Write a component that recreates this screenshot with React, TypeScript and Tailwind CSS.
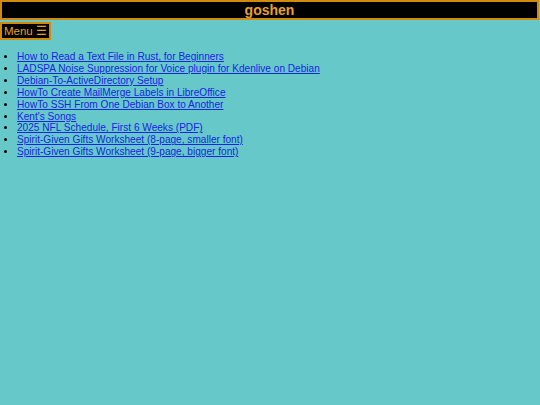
const links = [
  "How to Read a Text File in Rust, for Beginners",
  "LADSPA Noise Suppression for Voice plugin for Kdenlive on Debian",
  "Debian-To-ActiveDirectory Setup",
  "HowTo Create MailMerge Labels in LibreOffice",
  "HowTo SSH From One Debian Box to Another",
  "Kent's Songs",
  "2025 NFL Schedule, First 6 Weeks (PDF)",
  "Spirit-Given Gifts Worksheet (8-page, smaller font)",
  "Spirit-Given Gifts Worksheet (9-page, bigger font)",
]

export default function App() {
  return (
    <div className="min-h-[405px] bg-[#66c8c8] font-['Liberation_Sans',Arial,sans-serif]">
      <header className="mr-px border-2 border-[#d18b0c] bg-black text-center">
        <h1 className="text-[14px] font-bold leading-[16px] text-[#e8a12a]">goshen</h1>
      </header>
      <button className="mt-[2px] block border-2 border-[#d18b0c] bg-black px-[2px] text-[11.5px] leading-[14px] text-[#e8a12a]">
        Menu ☰
      </button>
      <ul className="mt-[11px] list-disc pl-[17px] text-[10.1px] leading-[11.9px]">
        {links.map((l) => (
          <li key={l}>
            <a href="#" className="text-[#1a24e6] underline">
              {l}
            </a>
          </li>
        ))}
      </ul>
    </div>
  )
}
